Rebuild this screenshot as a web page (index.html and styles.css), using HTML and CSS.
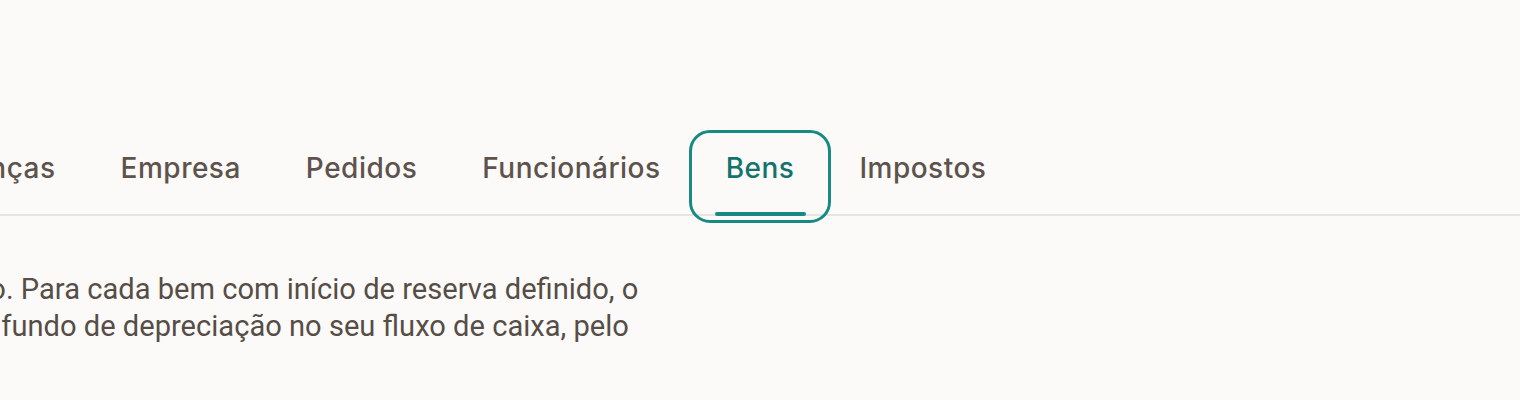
FILE: index.html
```html
<!DOCTYPE html>
<html lang="pt-BR">
<head>
<meta charset="utf-8">
<title>Bens</title>
<link rel="stylesheet" href="styles.css">
</head>
<body>
<main class="content">
  <nav class="tabs" aria-label="Seções">
    <button class="tab" type="button">Finanças</button>
    <button class="tab" type="button">Empresa</button>
    <button class="tab" type="button">Pedidos</button>
    <button class="tab" type="button">Funcionários</button>
    <button class="tab tab-active" type="button" aria-current="page">Bens</button>
    <button class="tab" type="button">Impostos</button>
  </nav>
  <p class="intro">Registre cada ativo. Para cada bem com início de reserva definido, o sistema separa o fundo de depreciação no seu fluxo de caixa, pelo valor mensal.</p>
</main>
</body>
</html>
```
FILE: styles.css
```css
html, body {
  margin: 0;
  padding: 0;
  background: #fbfaf8;
}

body {
  overflow: hidden;
  font-family: "Roboto", "Liberation Sans", sans-serif;
  color: #564d47;
}

.content {
  margin-left: -228px;
  padding-top: 137px;
}

.tabs {
  display: flex;
  gap: 5px;
  padding-left: 129px;
  box-shadow: inset 0 -2px 0 #e8e5e0;
}

.tab {
  position: relative;
  flex: none;
  margin: 0;
  padding: 14px 30px 31px;
  border: 0;
  border-radius: 14px;
  background: transparent;
  font-family: "Inter", "Liberation Sans", sans-serif;
  font-size: 28px;
  font-weight: 500;
  line-height: 34px;
  letter-spacing: 0.5px;
  color: #5e534c;
  white-space: nowrap;
  cursor: pointer;
}

.tab-active {
  color: #13746d;
  outline: 3px solid #178a81;
  outline-offset: 4px;
}

.tab-active::after {
  content: "";
  position: absolute;
  left: 19px;
  right: 18px;
  bottom: 0;
  height: 4px;
  border-radius: 2px;
  background: #168a80;
}

.intro {
  max-width: 873px;
  margin: 55px 0 0;
  font-size: 29.1px;
  line-height: 37px;
  text-indent: -13px;
}
```
